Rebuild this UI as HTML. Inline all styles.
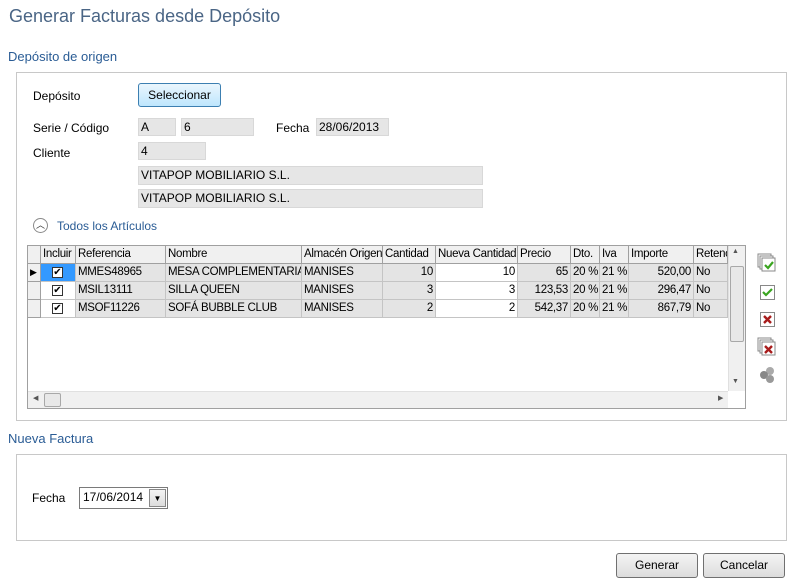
<!DOCTYPE html>
<html><head><meta charset="utf-8"><style>
*{box-sizing:border-box;margin:0;padding:0}
body{width:802px;height:583px;background:#fff;font-family:"Liberation Sans",sans-serif;font-size:12px;color:#000;position:relative;overflow:hidden}
.a{position:absolute;white-space:nowrap}
.box{position:absolute;background:#e6e6e6;border:1px solid #fff;box-shadow:inset 0 0 0 1px #d8d8d8;padding:2px 3px;font-size:12px;line-height:14px}
.panel{position:absolute;border:1px solid #c8c8c8}
.btn{position:absolute;border:1px solid #707070;border-radius:3px;background:linear-gradient(#f4f4f4,#dcdcdc);text-align:center;font-size:12px}
.grid{position:absolute;left:27px;top:245px;width:719px;height:164px;border:1px solid #a0a0a0;background:#fff;overflow:hidden;font-size:11.5px;letter-spacing:-0.3px}
.hdr,.row{position:absolute;left:0;height:18px;display:flex}
.c{border-right:1px solid #a0a0a0;border-bottom:1px solid #a0a0a0;padding:0 2px;line-height:17px;overflow:hidden;white-space:nowrap}
.hdr .c{background:#f0f0f0;border-bottom:1px solid #a0a0a0}
.row .c{background:#e4e4e4;border-color:#c4c4c4}
.r{text-align:right}
.rh{background:#f0f0f0!important;border-color:#a0a0a0!important}
.chk{display:inline-block;width:11px;height:11px;border:1px solid #333;background:#fff;font-size:10px;line-height:9px;text-align:center;margin:3px 0 0 11px;letter-spacing:0}
</style></head><body>
<div class="a" style="left:9px;top:6px;font-size:18px;color:#4a6585">Generar Facturas desde Depósito</div>
<div class="a" style="left:8px;top:49px;font-size:13px;color:#2a5c95">Depósito de origen</div>
<div class="panel" style="left:16px;top:72px;width:771px;height:349px"></div>
<div class="a" style="left:33px;top:89px">Depósito</div>
<div class="btn" style="left:138px;top:83px;width:83px;height:24px;line-height:22px;border-color:#3c7fb1;background:linear-gradient(#eaf6fd,#bee6fd)">Seleccionar</div>
<div class="a" style="left:33px;top:121px">Serie / Código</div>
<div class="box" style="left:137px;top:117px;width:40px;height:20px">A</div>
<div class="box" style="left:180px;top:117px;width:75px;height:20px">6</div>
<div class="a" style="left:276px;top:121px">Fecha</div>
<div class="box" style="left:315px;top:117px;width:75px;height:20px">28/06/2013</div>
<div class="a" style="left:33px;top:146px">Cliente</div>
<div class="box" style="left:137px;top:141px;width:70px;height:20px">4</div>
<div class="box" style="left:137px;top:165px;width:347px;height:21px">VITAPOP MOBILIARIO S.L.</div>
<div class="box" style="left:137px;top:188px;width:347px;height:21px">VITAPOP MOBILIARIO S.L.</div>
<div class="a" style="left:33px;top:218px;width:15px;height:15px;border:1px solid #8a8a8a;border-radius:50%;font-size:9px;line-height:13px;text-align:center;color:#333">︿</div>
<div class="a" style="left:57px;top:219px;color:#2a5c95;font-size:12px">Todos los Artículos</div>
<div class="grid">
<div class="hdr" style="top:0">
<div class="c" style="width:13px"></div><div class="c" style="width:35px">Incluir</div><div class="c" style="width:90px">Referencia</div><div class="c" style="width:136px">Nombre</div><div class="c" style="width:81px">Almacén Origen</div><div class="c" style="width:53px">Cantidad</div><div class="c" style="width:82px">Nueva Cantidad</div><div class="c" style="width:53px">Precio</div><div class="c" style="width:29px">Dto.</div><div class="c" style="width:29px">Iva</div><div class="c" style="width:65px">Importe</div><div class="c" style="width:34px">Retenc</div>
</div>
<div class="row" style="top:18px">
<div class="c rh" style="width:13px;font-size:9px">▶</div><div class="c" style="width:35px;padding:0;background:#3399ff"><span class="chk">✔</span></div><div class="c" style="width:90px">MMES48965</div><div class="c" style="width:136px">MESA COMPLEMENTARIA</div><div class="c" style="width:81px">MANISES</div><div class="c r" style="width:53px">10</div><div class="c r" style="width:82px;background:#fff">10</div><div class="c r" style="width:53px">65</div><div class="c" style="width:29px">20 %</div><div class="c" style="width:29px">21 %</div><div class="c r" style="width:65px">520,00</div><div class="c" style="width:34px">No</div>
</div>
<div class="row" style="top:36px">
<div class="c rh" style="width:13px"></div><div class="c" style="width:35px;padding:0;background:#fff"><span class="chk">✔</span></div><div class="c" style="width:90px">MSIL13111</div><div class="c" style="width:136px">SILLA QUEEN</div><div class="c" style="width:81px">MANISES</div><div class="c r" style="width:53px">3</div><div class="c r" style="width:82px;background:#fff">3</div><div class="c r" style="width:53px">123,53</div><div class="c" style="width:29px">20 %</div><div class="c" style="width:29px">21 %</div><div class="c r" style="width:65px">296,47</div><div class="c" style="width:34px">No</div>
</div>
<div class="row" style="top:54px">
<div class="c rh" style="width:13px"></div><div class="c" style="width:35px;padding:0;background:#fff"><span class="chk">✔</span></div><div class="c" style="width:90px">MSOF11226</div><div class="c" style="width:136px">SOFÁ BUBBLE CLUB</div><div class="c" style="width:81px">MANISES</div><div class="c r" style="width:53px">2</div><div class="c r" style="width:82px;background:#fff">2</div><div class="c r" style="width:53px">542,37</div><div class="c" style="width:29px">20 %</div><div class="c" style="width:29px">21 %</div><div class="c r" style="width:65px">867,79</div><div class="c" style="width:34px">No</div>
</div>
<div class="a" style="left:700px;top:0;width:18px;height:145px;background:#f0f0f0;border-left:1px solid #e0e0e0"></div>
<div class="a" style="left:702px;top:20px;width:14px;height:76px;background:#e8e8e8;border:1px solid #a8a8a8;border-radius:2px"></div>
<div class="a" style="left:704px;top:2px;font-size:7px;color:#555">▲</div>
<div class="a" style="left:704px;top:132px;font-size:7px;color:#555">▼</div>
<div class="a" style="left:0;top:145px;width:700px;height:18px;background:#f0f0f0;border-top:1px solid #e0e0e0"></div>
<div class="a" style="left:16px;top:147px;width:17px;height:14px;background:#e8e8e8;border:1px solid #a8a8a8;border-radius:2px"></div>
<div class="a" style="left:5px;top:148px;font-size:7px;color:#555">◀</div>
<div class="a" style="left:690px;top:148px;font-size:7px;color:#555">▶</div>
</div>
<svg class="a" style="left:757px;top:253px" width="22" height="140">
<g fill="#fff" stroke="#888"><rect x="1" y="1" width="13" height="13"/><rect x="3" y="3" width="13" height="13"/><rect x="5" y="5" width="13" height="13"/></g>
<path d="M8 12l3 3 5-6" stroke="#3aa520" stroke-width="2.2" fill="none"/>
<rect x="3.5" y="32.5" width="14" height="14" fill="#fff" stroke="#888"/>
<path d="M6 39l3 3 6-6" stroke="#3aa520" stroke-width="2.2" fill="none"/>
<rect x="3.5" y="59.5" width="14" height="14" fill="#fff" stroke="#888"/>
<path d="M7 63l7 7M14 63l-7 7" stroke="#a81c1c" stroke-width="2.4"/>
<g fill="#fff" stroke="#888"><rect x="1" y="85" width="13" height="13"/><rect x="3" y="87" width="13" height="13"/><rect x="5" y="89" width="13" height="13"/></g>
<path d="M8 93l7 7M15 93l-7 7" stroke="#a81c1c" stroke-width="2.4"/>
<circle cx="13" cy="118" r="4" fill="#aaa"/><circle cx="7" cy="122" r="4" fill="#888"/><circle cx="13" cy="126" r="4" fill="#999"/>
</svg>
<div class="a" style="left:8px;top:431px;font-size:13px;color:#2a5c95">Nueva Factura</div>
<div class="panel" style="left:16px;top:454px;width:771px;height:87px"></div>
<div class="a" style="left:32px;top:491px">Fecha</div>
<div class="a" style="left:79px;top:487px;width:89px;height:22px;border:1px solid #7a7a7a;background:#fff;padding:2px 3px">17/06/2014</div>
<div class="a" style="left:149px;top:489px;width:17px;height:18px;border:1px solid #888;background:linear-gradient(#f4f4f4,#ddd);font-size:8px;text-align:center;line-height:17px">▼</div>
<div class="btn" style="left:616px;top:553px;width:82px;height:25px;line-height:23px">Generar</div>
<div class="btn" style="left:703px;top:553px;width:82px;height:25px;line-height:23px">Cancelar</div>
</body></html>
